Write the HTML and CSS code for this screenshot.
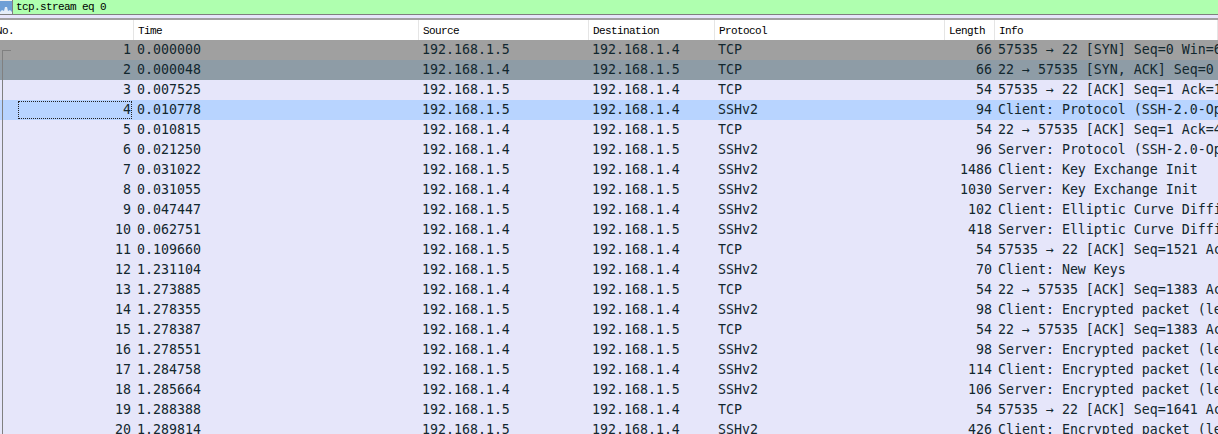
FILE: index.html
```html
<!DOCTYPE html>
<html lang="en">
<head>
<meta charset="utf-8">
<title>tcp.stream eq 0</title>
<link rel="stylesheet" href="styles.css">
</head>
<body>
<div class="filterbar">
  <div class="filter-icon"><svg width="12" height="14" viewBox="0 0 12 14"><rect width="12" height="14" fill="#6f9fd6"/><path d="M0 14v-3l2-2 2 1 1-4h2l1 4 2-1 2 2v3z" fill="#e4edf8"/></svg></div>
  <div class="filter-input">tcp.stream eq 0</div>
</div>
<div class="table">
  <div class="row head"><span class="no"><span class="head-no">No.</span></span><span class="time">Time</span><span class="src">Source</span><span class="dst">Destination</span><span class="proto">Protocol</span><span class="len">Length</span><span class="info">Info</span></div>
  <div class="rows">
    <div class="conv"></div>
    <div class="row syn"><span class="no">1</span><span class="time">0.000000</span><span class="src">192.168.1.5</span><span class="dst">192.168.1.4</span><span class="proto">TCP</span><span class="len">66</span><span class="info">57535 → 22 [SYN] Seq=0 Win=6</span></div>
    <div class="row synack"><span class="no">2</span><span class="time">0.000048</span><span class="src">192.168.1.4</span><span class="dst">192.168.1.5</span><span class="proto">TCP</span><span class="len">66</span><span class="info">22 → 57535 [SYN, ACK] Seq=0</span></div>
    <div class="row"><span class="no">3</span><span class="time">0.007525</span><span class="src">192.168.1.5</span><span class="dst">192.168.1.4</span><span class="proto">TCP</span><span class="len">54</span><span class="info">57535 → 22 [ACK] Seq=1 Ack=1</span></div>
    <div class="row selected"><span class="no"><span class="focus">4</span></span><span class="time">0.010778</span><span class="src">192.168.1.5</span><span class="dst">192.168.1.4</span><span class="proto">SSHv2</span><span class="len">94</span><span class="info">Client: Protocol (SSH-2.0-Op</span></div>
    <div class="row"><span class="no">5</span><span class="time">0.010815</span><span class="src">192.168.1.4</span><span class="dst">192.168.1.5</span><span class="proto">TCP</span><span class="len">54</span><span class="info">22 → 57535 [ACK] Seq=1 Ack=4</span></div>
    <div class="row"><span class="no">6</span><span class="time">0.021250</span><span class="src">192.168.1.4</span><span class="dst">192.168.1.5</span><span class="proto">SSHv2</span><span class="len">96</span><span class="info">Server: Protocol (SSH-2.0-Op</span></div>
    <div class="row"><span class="no">7</span><span class="time">0.031022</span><span class="src">192.168.1.5</span><span class="dst">192.168.1.4</span><span class="proto">SSHv2</span><span class="len">1486</span><span class="info">Client: Key Exchange Init</span></div>
    <div class="row"><span class="no">8</span><span class="time">0.031055</span><span class="src">192.168.1.4</span><span class="dst">192.168.1.5</span><span class="proto">SSHv2</span><span class="len">1030</span><span class="info">Server: Key Exchange Init</span></div>
    <div class="row"><span class="no">9</span><span class="time">0.047447</span><span class="src">192.168.1.5</span><span class="dst">192.168.1.4</span><span class="proto">SSHv2</span><span class="len">102</span><span class="info">Client: Elliptic Curve Diffi</span></div>
    <div class="row"><span class="no">10</span><span class="time">0.062751</span><span class="src">192.168.1.4</span><span class="dst">192.168.1.5</span><span class="proto">SSHv2</span><span class="len">418</span><span class="info">Server: Elliptic Curve Diffi</span></div>
    <div class="row"><span class="no">11</span><span class="time">0.109660</span><span class="src">192.168.1.5</span><span class="dst">192.168.1.4</span><span class="proto">TCP</span><span class="len">54</span><span class="info">57535 → 22 [ACK] Seq=1521 Ac</span></div>
    <div class="row"><span class="no">12</span><span class="time">1.231104</span><span class="src">192.168.1.5</span><span class="dst">192.168.1.4</span><span class="proto">SSHv2</span><span class="len">70</span><span class="info">Client: New Keys</span></div>
    <div class="row"><span class="no">13</span><span class="time">1.273885</span><span class="src">192.168.1.4</span><span class="dst">192.168.1.5</span><span class="proto">TCP</span><span class="len">54</span><span class="info">22 → 57535 [ACK] Seq=1383 Ac</span></div>
    <div class="row"><span class="no">14</span><span class="time">1.278355</span><span class="src">192.168.1.5</span><span class="dst">192.168.1.4</span><span class="proto">SSHv2</span><span class="len">98</span><span class="info">Client: Encrypted packet (le</span></div>
    <div class="row"><span class="no">15</span><span class="time">1.278387</span><span class="src">192.168.1.4</span><span class="dst">192.168.1.5</span><span class="proto">TCP</span><span class="len">54</span><span class="info">22 → 57535 [ACK] Seq=1383 Ac</span></div>
    <div class="row"><span class="no">16</span><span class="time">1.278551</span><span class="src">192.168.1.4</span><span class="dst">192.168.1.5</span><span class="proto">SSHv2</span><span class="len">98</span><span class="info">Server: Encrypted packet (le</span></div>
    <div class="row"><span class="no">17</span><span class="time">1.284758</span><span class="src">192.168.1.5</span><span class="dst">192.168.1.4</span><span class="proto">SSHv2</span><span class="len">114</span><span class="info">Client: Encrypted packet (le</span></div>
    <div class="row"><span class="no">18</span><span class="time">1.285664</span><span class="src">192.168.1.4</span><span class="dst">192.168.1.5</span><span class="proto">SSHv2</span><span class="len">106</span><span class="info">Server: Encrypted packet (le</span></div>
    <div class="row"><span class="no">19</span><span class="time">1.288388</span><span class="src">192.168.1.5</span><span class="dst">192.168.1.4</span><span class="proto">TCP</span><span class="len">54</span><span class="info">57535 → 22 [ACK] Seq=1641 Ac</span></div>
    <div class="row"><span class="no">20</span><span class="time">1.289814</span><span class="src">192.168.1.5</span><span class="dst">192.168.1.4</span><span class="proto">SSHv2</span><span class="len">426</span><span class="info">Client: Encrypted packet (le</span></div>
  </div>
</div>
</body>
</html>
```
FILE: styles.css
```css
html, body { margin: 0; padding: 0; }
body { width: 1218px; height: 434px; overflow: hidden; background: #e6e6fa; font-family: "DejaVu Sans Mono", monospace; }
.filterbar { display: flex; height: 14px; border-bottom: 1px solid #7f7f7f; background: #afffaf; }
.filter-icon { width: 12px; height: 14px; overflow: hidden; background: #f0f0f0; }
.filter-input { flex: 1; padding: 1px 0 0 3px; font: 11px/13px "Liberation Mono", monospace; letter-spacing: -0.6px; color: #000; border-left: 1px solid #808080; }
.table { margin-top: 3px; border-top: 2px solid #a0a0a0; }
.row { display: grid; grid-template-columns: 134px 285px 170px 126px 230px 50px 1fr; height: 20px; line-height: 20px; font-size: 13.28px; color: #12272e; white-space: nowrap; overflow: hidden; }
.row > span { overflow: hidden; padding: 0 3px; }
.no, .len { text-align: right; }
.head { font: 11px/20px "Liberation Mono", monospace; letter-spacing: -0.6px; background: #fff; color: #000; }
.head > span { border-right: 1px solid #e5e5e5; text-align: left; padding-left: 4px; padding-top: 1px; }
.head .no { padding-left: 0; margin-left: -4px; }
.rows { position: relative; }
.syn { background: #a0a0a0; }
.synack { background: #8e9ca6; }
.selected { background: #b8d4ff; }
.focus { display: block; margin: 1px -1px 0 15px; height: 18px; line-height: 17px; padding-right: 1px; outline: 1px dotted #222; outline-offset: -1px; }
.conv { position: absolute; left: 2px; top: 10px; bottom: 0; width: 8px; border-left: 1px solid #808080; border-top: 1px solid #808080; }
```
